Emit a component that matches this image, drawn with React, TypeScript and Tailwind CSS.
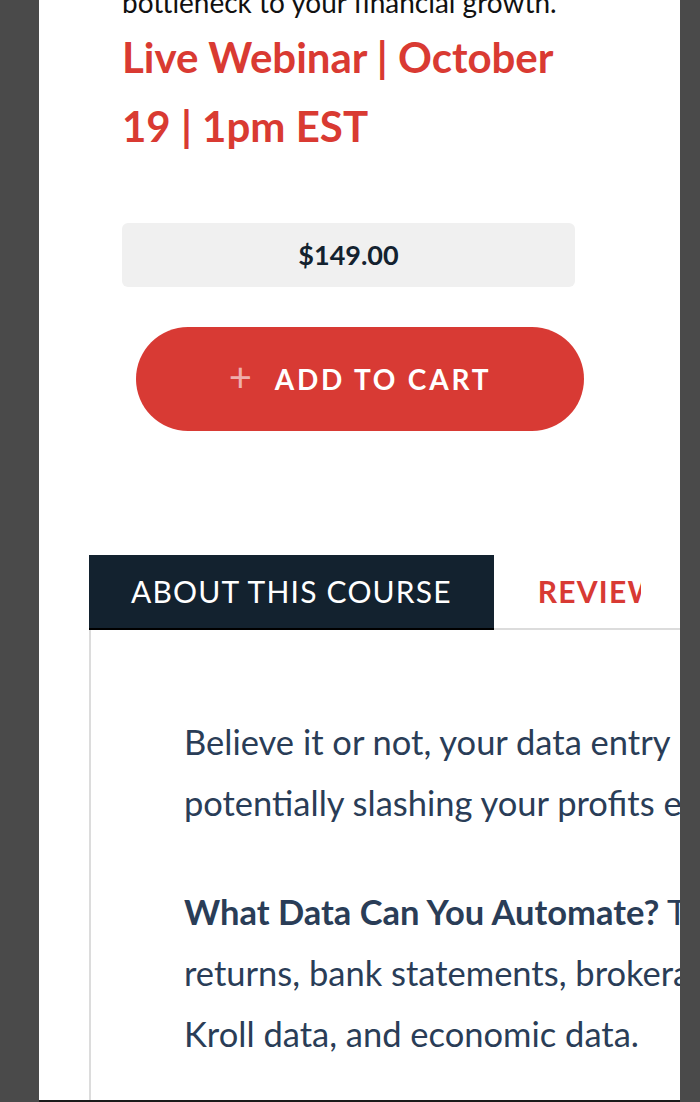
const App = () => {
  return (
    <div className="w-[700px] h-[1102px] bg-[#4a4a4a] overflow-hidden flex">
      <div className="ml-[39px] w-[641px] h-[1102px] bg-white overflow-hidden relative border-b-2 border-[#1a1a1a] font-['Lato',sans-serif]">
        {/* product summary */}
        <div className="pl-[83px] w-[536px]">
          <p className="-mt-[22px] text-[28px] leading-[48px] text-[#111] whitespace-nowrap">
            bottleneck to your financial growth.
          </p>
          <h2 className="-mt-[3px] text-[42px] leading-[69px] font-bold text-[#d93a32]">
            Live Webinar | October 19 | 1pm EST
          </h2>
          <div className="mt-[62px] h-[64px] rounded-md bg-[#f0f0f0] flex items-center justify-center text-[27px] font-bold text-[#13222f]">
            $149.00
          </div>
          <button className="mt-[40px] ml-[14px] w-[448px] h-[104px] rounded-full bg-[#d83a34] flex items-center justify-center gap-[20px] text-white text-[28px] font-bold tracking-[0.1em]">
            <span className="text-white/60 font-normal text-[40px] leading-none -mt-[4px]">+</span>
            <span>ADD TO CART</span>
          </button>
        </div>

        {/* tabs */}
        <div className="mt-[124px] ml-[50px]">
          <div className="flex">
            <div className="h-[75px] px-[42px] bg-[#13222f] border-b-2 border-black flex items-center text-white text-[30px] tracking-[0.04em] whitespace-nowrap shrink-0">
              ABOUT THIS COURSE
            </div>
            <div className="flex-1 h-[75px] border-b-2 border-[#dcdcdc]">
              <div className="w-[147px] h-full overflow-hidden pl-[44px] flex items-center text-[#d83a34] text-[30px] font-bold tracking-[0.04em] whitespace-nowrap">
                REVIEWS
              </div>
            </div>
          </div>
          <div className="w-[800px] h-[500px] border-l-2 border-[#dcdcdc] pl-[93px] pt-[81px] text-[34.5px] leading-[61px] text-[#2a3d57] whitespace-nowrap">
            <p>
              Believe it or not, your data entry process is a major
              <br />
              potentially slashing your profits every single month.
            </p>
            <p className="mt-[48px]">
              <strong>What Data Can You Automate?</strong> Tax
              <br />
              returns, bank statements, brokerage statements,
              <br />
              Kroll data, and economic data.
            </p>
          </div>
        </div>
      </div>
    </div>
  );
};

export default App;
